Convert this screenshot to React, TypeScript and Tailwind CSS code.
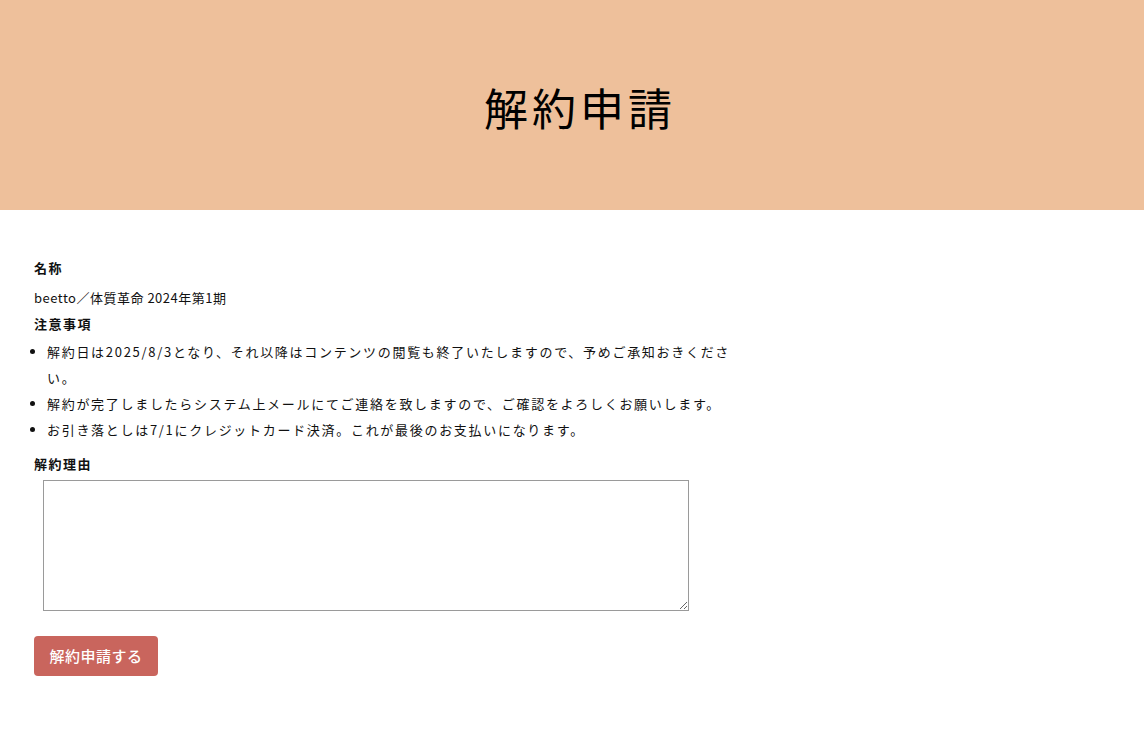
export default function App() {
  const notes = [
    '解約日は2025/8/3となり、それ以降はコンテンツの閲覧も終了いたしますので、予めご承知おきください。',
    '解約が完了しましたらシステム上メールにてご連絡を致しますので、ご確認をよろしくお願いします。',
    'お引き落としは7/1にクレジットカード決済。これが最後のお支払いになります。',
  ];

  return (
    <div
      className="min-h-screen bg-white text-[#111]"
      style={{ fontFamily: '"Noto Sans CJK JP", "Noto Sans", sans-serif' }}
    >
      <header className="h-[210px] bg-[#EEC09B] flex items-center justify-center">
        <h1 className="text-[44px] leading-none tracking-[4px] text-black font-normal pt-1 pl-[16px]">
          解約申請
        </h1>
      </header>

      <main className="w-[720px] ml-[34px] pt-[48px] pb-10">
        <h2 className="text-[13px] leading-[20px] font-bold tracking-[1.5px]">名称</h2>
        <p className="mt-[10px] text-[13px] leading-[20px] tracking-[0.5px]">beetto／体質革命 2024年第1期</p>

        <h2 className="mt-[6px] text-[13px] leading-[20px] font-bold tracking-[1.5px]">注意事項</h2>
        <ul className="mt-[5px] list-disc pl-[13px] text-[13px] leading-[26px] tracking-[1.7px]">
          {notes.map(note => (
            <li key={note}>{note}</li>
          ))}
        </ul>

        <h2 className="mt-[11px] text-[13px] leading-[20px] font-bold tracking-[1.5px]">解約理由</h2>
        <textarea className="block mt-[6px] ml-[9px] w-[646px] h-[131px] border border-[#9a9a9a] bg-white" />

        <button className="mt-[25px] h-[40px] w-[124px] rounded-[4px] bg-[#C9655D] text-white text-[15px] font-medium tracking-[0.5px]">
          解約申請する
        </button>
      </main>
    </div>
  );
}
